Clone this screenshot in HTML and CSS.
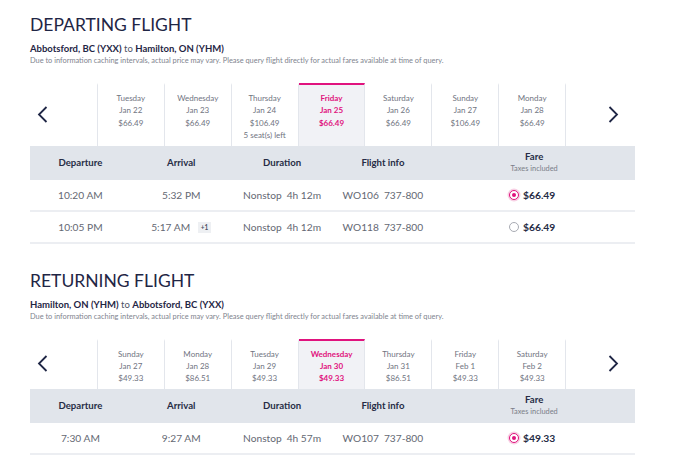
FILE: index.html
```html
<!DOCTYPE html>
<html>
<head>
<meta charset="utf-8">
<link rel="stylesheet" href="styles.css">
</head>
<body>
<div class="page">
  <section class="flight">
    <h1 class="title">DEPARTING FLIGHT</h1>
    <p class="route"><b>Abbotsford, BC (YXX)</b> to <b>Hamilton, ON (YHM)</b></p>
    <p class="note">Due to information caching intervals, actual price may vary. Please query flight directly for actual fares available at time of query.</p>
    <div class="strip">
      <div class="arrow arrow-left"><svg width="11" height="17" viewBox="0 0 11 17"><path d="M9.5 1 L2 8.5 L9.5 16" fill="none" stroke="#1f2645" stroke-width="1.8"/></svg></div>
      <div class="day"><span>Tuesday</span><span>Jan 22</span><span>$66.49</span></div>
      <div class="day"><span>Wednesday</span><span>Jan 23</span><span>$66.49</span></div>
      <div class="day"><span>Thursday</span><span>Jan 24</span><span>$106.49</span><span>5 seat(s) left</span></div>
      <div class="day selected"><span>Friday</span><span>Jan 25</span><span>$66.49</span></div>
      <div class="day"><span>Saturday</span><span>Jan 26</span><span>$66.49</span></div>
      <div class="day"><span>Sunday</span><span>Jan 27</span><span>$106.49</span></div>
      <div class="day"><span>Monday</span><span>Jan 28</span><span>$66.49</span></div>
      <div class="arrow arrow-right"><svg width="11" height="17" viewBox="0 0 11 17"><path d="M1.5 1 L9 8.5 L1.5 16" fill="none" stroke="#1f2645" stroke-width="1.8"/></svg></div>
    </div>
    <div class="table">
      <div class="row head">
        <div>Departure</div><div>Arrival</div><div>Duration</div><div>Flight info</div>
        <div class="fare-head"><span>Fare</span><small>Taxes included</small></div>
      </div>
      <div class="row">
        <div>10:20 AM</div><div>5:32 PM</div><div><span class="gap">Nonstop</span>4h 12m</div><div><span class="gap">WO106</span>737-800</div>
        <div class="fare"><span class="radio on"></span>$66.49</div>
      </div>
      <div class="row">
        <div>10:05 PM</div><div>5:17 AM <span class="plus">+1</span></div><div><span class="gap">Nonstop</span>4h 12m</div><div><span class="gap">WO118</span>737-800</div>
        <div class="fare"><span class="radio"></span>$66.49</div>
      </div>
    </div>
  </section>

  <section class="flight second">
    <h1 class="title">RETURNING FLIGHT</h1>
    <p class="route"><b>Hamilton, ON (YHM)</b> to <b>Abbotsford, BC (YXX)</b></p>
    <p class="note">Due to information caching intervals, actual price may vary. Please query flight directly for actual fares available at time of query.</p>
    <div class="strip">
      <div class="arrow arrow-left"><svg width="11" height="17" viewBox="0 0 11 17"><path d="M9.5 1 L2 8.5 L9.5 16" fill="none" stroke="#1f2645" stroke-width="1.8"/></svg></div>
      <div class="day"><span>Sunday</span><span>Jan 27</span><span>$49.33</span></div>
      <div class="day"><span>Monday</span><span>Jan 28</span><span>$86.51</span></div>
      <div class="day"><span>Tuesday</span><span>Jan 29</span><span>$49.33</span></div>
      <div class="day selected"><span>Wednesday</span><span>Jan 30</span><span>$49.33</span></div>
      <div class="day"><span>Thursday</span><span>Jan 31</span><span>$86.51</span></div>
      <div class="day"><span>Friday</span><span>Feb 1</span><span>$49.33</span></div>
      <div class="day"><span>Saturday</span><span>Feb 2</span><span>$49.33</span></div>
      <div class="arrow arrow-right"><svg width="11" height="17" viewBox="0 0 11 17"><path d="M1.5 1 L9 8.5 L1.5 16" fill="none" stroke="#1f2645" stroke-width="1.8"/></svg></div>
    </div>
    <div class="table">
      <div class="row head">
        <div>Departure</div><div>Arrival</div><div>Duration</div><div>Flight info</div>
        <div class="fare-head"><span>Fare</span><small>Taxes included</small></div>
      </div>
      <div class="row">
        <div>7:30 AM</div><div>9:27 AM</div><div><span class="gap">Nonstop</span>4h 57m</div><div><span class="gap">WO107</span>737-800</div>
        <div class="fare"><span class="radio on"></span>$49.33</div>
      </div>
    </div>
  </section>
</div>
</body>
</html>
```

FILE: styles.css
```css
* { box-sizing: border-box; }
html, body { margin: 0; padding: 0; background: #fff; }
body { font-family: Lato, "Open Sans", sans-serif; color: #1f2645; }
.page { width: 605px; margin-left: 30px; padding-top: 13px; }
.flight.second { margin-top: 25px; }
.title {
  margin: 0;
  font-size: 17.5px;
  line-height: 23px;
  font-weight: 400;
  color: #1f2645;
}
.route {
  margin: 7px 0 0;
  font-size: 9.5px;
  line-height: 12px;
  color: #4c5163;
}
.route b { color: #1f2645; font-weight: 700; }
.note {
  margin: 1px 0 0;
  font-size: 7.4px;
  line-height: 10px;
  color: #80848e;
}
.strip {
  display: flex;
  margin-top: 17px;
}
.arrow {
  display: flex;
  align-items: center;
}
.arrow-left { width: 67px; padding-left: 7px; justify-content: flex-start; }
.arrow-right { width: 69px; padding-right: 16px; justify-content: flex-end; }
.day {
  width: 67px;
  display: flex;
  flex-direction: column;
  align-items: center;
  padding: 7px 0 4px;
  border-right: 1px solid #e3e6ec;
  border-top: 2px solid transparent;
  font-size: 8px;
  line-height: 12.4px;
  color: #70747f;
}
.day:nth-child(2) { border-left: 1px solid #e3e6ec; width: 68px; }
.day.selected {
  background: #f1f2f6;
  border-top-color: #e0137e;
  color: #e0137e;
  font-weight: 700;
}
.table { width: 605px; }
.row {
  display: grid;
  grid-template-columns: 1fr 1fr 1fr 1fr 2fr;
  align-items: center;
  height: 32px;
  border-bottom: 2px solid #eceef2;
  font-size: 10.2px;
  color: #646873;
  text-align: center;
}
.gap { margin-right: 5px; }
.row.head {
  height: 34px;
  background: #e1e5eb;
  border-bottom: none;
  font-size: 9.6px;
  font-weight: 700;
  color: #262c45;
}
.fare-head { display: flex; flex-direction: column; align-items: center; line-height: 12px; }
.fare-head small { font-size: 7.4px; font-weight: 400; color: #7a7e88; line-height: 11px; }
.fare {
  display: flex;
  align-items: center;
  justify-content: center;
  gap: 4px;
  font-size: 10.3px;
  font-weight: 700;
  color: #262c45;
  padding-right: 4px;
}
.radio {
  width: 10px;
  height: 10px;
  border-radius: 50%;
  border: 1px solid #a8abb3;
  background: #fff;
  position: relative;
}
.radio.on {
  border-color: #e0137e;
  box-shadow: 0 0 0 1.5px #f8d0e4;
}
.radio.on::after {
  content: "";
  position: absolute;
  left: 2px; top: 2px;
  width: 4px; height: 4px;
  border-radius: 50%;
  background: #e0137e;
}
.plus {
  display: inline-block;
  margin-left: 5px;
  padding: 1px 3px;
  font-size: 6.5px;
  line-height: 9px;
  font-weight: 700;
  color: #4c5163;
  background: #eef0f3;
  vertical-align: 1px;
}
```
